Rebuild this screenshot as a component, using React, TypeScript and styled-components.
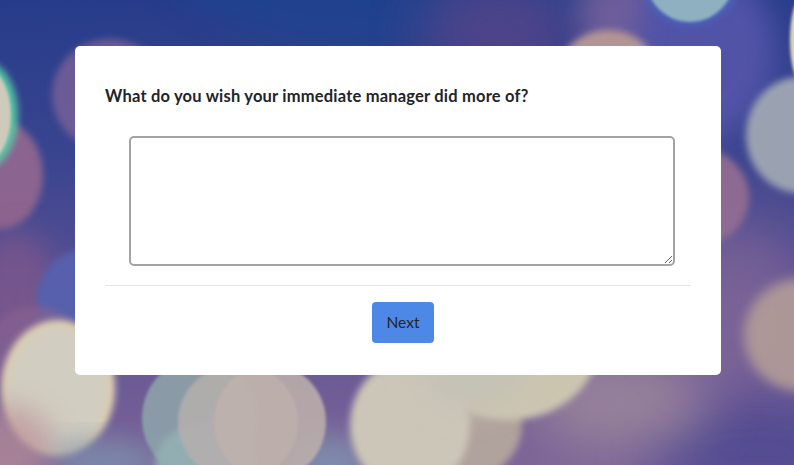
import styled, { createGlobalStyle } from "styled-components";

const GlobalStyle = createGlobalStyle`
  html, body {
    margin: 0;
    height: 100%;
    overflow: hidden;
    font-family: "Lato", "Noto Sans", sans-serif;
  }
`;

const Page = styled.div`
  position: relative;
  box-sizing: border-box;
  width: 100%;
  height: 100vh;
  padding: 46px 0 0 75px;
  overflow: hidden;
  background: linear-gradient(
    178deg,
    #263c8a 0%,
    #3b4590 34%,
    #5c5192 60%,
    #7f6698 100%
  );
`;

const Bokeh = styled.svg`
  position: absolute;
  inset: 0;
  width: 100%;
  height: 100%;
`;

const Card = styled.main`
  position: relative;
  box-sizing: border-box;
  width: 646px;
  height: 329px;
  padding: 39px 30px 0;
  background: #fff;
  border-radius: 5px;
`;

const Question = styled.h2`
  margin: 0 0 28px;
  height: 23px;
  font-size: 16.5px;
  line-height: 23px;
  font-weight: 700;
  letter-spacing: 0.2px;
  color: #212529;
`;

const Answer = styled.textarea`
  display: block;
  box-sizing: border-box;
  width: 546px;
  height: 130px;
  margin: 0 0 19px 24px;
  padding: 8px;
  background: #fff;
  border: 2px solid #a3a3a3;
  border-radius: 5px;
  outline: none;
`;

const Footer = styled.div`
  display: flex;
  justify-content: center;
  padding: 16px 0 0 10px;
  border-top: 1px solid #e5e5e5;
`;

const NextButton = styled.button`
  width: 62px;
  height: 41px;
  padding: 0 0 2px;
  background: #4d88e6;
  border: none;
  border-radius: 4px;
  font-family: inherit;
  font-size: 15.5px;
  color: #212529;
`;

const spots = [
  { cx: 400, cy: -40, rx: 240, ry: 90, fill: "#1f4490", o: 0.6, blur: "soft" },
  { cx: 680, cy: 50, rx: 95, ry: 95, fill: "#5a58ae", o: 0.8, blur: "soft" },
  { cx: 500, cy: 30, rx: 80, ry: 50, fill: "#5a4588", o: 0.8, blur: "wide" },
  { cx: 610, cy: 10, rx: 34, ry: 40, fill: "#7d6496", o: 0.7, blur: "soft" },
  { cx: 608, cy: 84, rx: 54, ry: 54, fill: "#b39494", o: 1, blur: "mid" },
  { cx: 690, cy: -18, rx: 48, ry: 44, fill: "#4a62b8", o: 1, blur: "mid" },
  { cx: 690, cy: -22, rx: 44, ry: 44, fill: "#8fb0c0", o: 1, blur: "edge" },
  { cx: 110, cy: 95, rx: 58, ry: 56, fill: "#7a6298", o: 0.8, blur: "mid" },
  { cx: 0, cy: 175, rx: 43, ry: 54, fill: "#94688f", o: 0.9, blur: "mid" },
  { cx: -16, cy: 115, rx: 34, ry: 54, fill: "#57cfa6", o: 0.9, blur: "mid" },
  { cx: -18, cy: 115, rx: 29, ry: 49, fill: "#cfcabc", o: 1, blur: "edge" },
  { cx: 695, cy: 197, rx: 54, ry: 50, fill: "#8e6a92", o: 1, blur: "mid" },
  { cx: 800, cy: 135, rx: 54, ry: 58, fill: "#9aa2b2", o: 1, blur: "mid" },
  { cx: 800, cy: 40, rx: 10, ry: 40, fill: "#e2d7b2", o: 1, blur: "edge" },
  { cx: 15, cy: 290, rx: 40, ry: 60, fill: "#85598a", o: 0.65, blur: "soft" },
  { cx: 85, cy: 300, rx: 48, ry: 50, fill: "#5660ac", o: 1, blur: "mid" },
  { cx: 35, cy: 352, rx: 48, ry: 46, fill: "#8a6492", o: 0.6, blur: "mid" },
  { cx: 58, cy: 388, rx: 57, ry: 68, fill: "#ddcdb0", o: 1, blur: "mid" },
  { cx: 58, cy: 388, rx: 50, ry: 61, fill: "#d1cdc0", o: 1, blur: "mid" },
  { cx: 0, cy: 450, rx: 55, ry: 45, fill: "#b98f98", o: 0.7, blur: "soft" },
  { cx: 105, cy: 462, rx: 55, ry: 22, fill: "#7c93ad", o: 0.8, blur: "soft" },
  { cx: 330, cy: 465, rx: 40, ry: 30, fill: "#7f90ad", o: 0.9, blur: "soft" },
  { cx: 200, cy: 418, rx: 58, ry: 60, fill: "#8c9fa8", o: 0.95, blur: "edge" },
  { cx: 205, cy: 465, rx: 50, ry: 42, fill: "#93b0b4", o: 0.9, blur: "mid" },
  { cx: 238, cy: 422, rx: 60, ry: 58, fill: "#b6afae", o: 0.85, blur: "edge" },
  { cx: 270, cy: 422, rx: 56, ry: 58, fill: "#bfb2ac", o: 0.85, blur: "edge" },
  { cx: 760, cy: 450, rx: 120, ry: 55, fill: "#4f4a92", o: 0.9, blur: "wide" },
  { cx: 620, cy: 400, rx: 90, ry: 50, fill: "#a08a9c", o: 0.8, blur: "wide" },
  { cx: 730, cy: 300, rx: 70, ry: 80, fill: "#8f6f9a", o: 0.5, blur: "wide" },
  { cx: 800, cy: 335, rx: 56, ry: 56, fill: "#b09a98", o: 0.95, blur: "blurry" },
  { cx: 450, cy: 425, rx: 72, ry: 60, fill: "#b0a29c", o: 1, blur: "mid" },
  { cx: 510, cy: 340, rx: 90, ry: 80, fill: "#cbc5b0", o: 1, blur: "mid" },
  { cx: 410, cy: 425, rx: 60, ry: 66, fill: "#ccc6b8", o: 1, blur: "mid" },
  { cx: 470, cy: 340, rx: 62, ry: 70, fill: "#c5c2b6", o: 1, blur: "soft" },
];

const App = () => {
  return (
    <Page>
      <GlobalStyle />
      <Bokeh viewBox="0 0 794 465" preserveAspectRatio="none">
        <defs>
          <filter id="edge" x="-20%" y="-20%" width="140%" height="140%">
            <feGaussianBlur stdDeviation="1.8" />
          </filter>
          <filter id="mid" x="-30%" y="-30%" width="160%" height="160%">
            <feGaussianBlur stdDeviation="3.5" />
          </filter>
          <filter id="blurry" x="-30%" y="-30%" width="160%" height="160%">
            <feGaussianBlur stdDeviation="6" />
          </filter>
          <filter id="soft" x="-40%" y="-40%" width="180%" height="180%">
            <feGaussianBlur stdDeviation="14" />
          </filter>
          <filter id="wide" x="-60%" y="-60%" width="220%" height="220%">
            <feGaussianBlur stdDeviation="26" />
          </filter>
        </defs>
        {spots.map((s, i) => (
          <ellipse
            key={i}
            cx={s.cx}
            cy={s.cy}
            rx={s.rx}
            ry={s.ry}
            fill={s.fill}
            opacity={s.o}
            filter={`url(#${s.blur})`}
          />
        ))}
      </Bokeh>
      <Card>
        <Question>What do you wish your immediate manager did more of?</Question>
        <Answer />
        <Footer>
          <NextButton type="button">Next</NextButton>
        </Footer>
      </Card>
    </Page>
  );
};

export default App;
